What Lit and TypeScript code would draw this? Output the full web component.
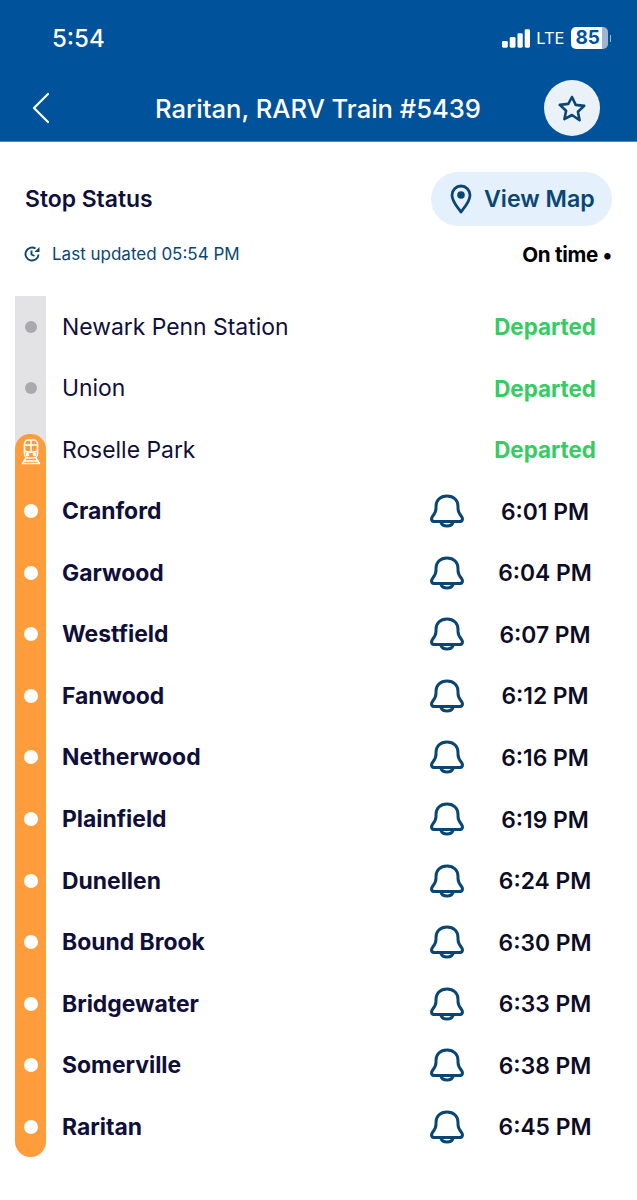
import {LitElement, css, html, svg} from 'lit';
import {customElement} from 'lit/decorators.js';

const passed = ['Newark Penn Station', 'Union', 'Roselle Park'];
const upcoming = [
    ['Cranford', '6:01 PM'],
    ['Garwood', '6:04 PM'],
    ['Westfield', '6:07 PM'],
    ['Fanwood', '6:12 PM'],
    ['Netherwood', '6:16 PM'],
    ['Plainfield', '6:19 PM'],
    ['Dunellen', '6:24 PM'],
    ['Bound Brook', '6:30 PM'],
    ['Bridgewater', '6:33 PM'],
    ['Somerville', '6:38 PM'],
    ['Raritan', '6:45 PM'],
];

const bell = svg`<path d="M17 3c-7 0-11 4.500-11 10.500v2c0 3.500-1.500 5.500-3.500 8-1.800 2.300-1 5 2 5h25c3 0 3.800-2.700 2-5-2-2.500-3.500-4.500-3.500-8v-2C28 7.500 24 3 17 3Z"/><path d="M11 29.500c.8 2.500 3.200 3.500 6 3.500s5.200-1 6-3.500"/>`;

@customElement('app-root')
export class AppRoot extends LitElement {
    static styles = css`
        :host {
            display: block;
            width: 637px;
            height: 1200px;
            background: #fff;
            font-family: Inter, 'Liberation Sans', sans-serif;
            color: #0f0f3a;
            overflow: hidden;
        }

        .header {
            height: 142px;
            box-sizing: border-box;
            background: #00529b;
            border-bottom: 1px solid #5f84a8;
            color: #fff;
            padding: 24px 37px 0 31px;
        }

        .status {
            height: 28px;
            display: flex;
            align-items: center;
            justify-content: space-between;
            padding-left: 21px;
        }

        .clock {
            font-size: 24px;
            font-weight: 500;
        }

        .signal {
            display: flex;
            align-items: center;
            gap: 6px;
            margin-right: -11px;
        }

        .lte {
            font-size: 16.500px;
            font-weight: 400;
        }

        .battery {
            width: 37px;
            height: 22px;
            border-radius: 5px;
            background: linear-gradient(90deg, #fff 85%, #9db6d2 85%);
            color: #00529b;
            font-size: 19px;
            font-weight: 700;
            line-height: 22px;
            padding-left: 5px;
            box-sizing: border-box;
        }

        .nub {
            width: 1.500px;
            height: 7px;
            background: #9db6d2;
            margin-left: -4px;
        }

        .nav {
            height: 56px;
            margin-top: 28px;
            display: flex;
            align-items: center;
        }

        .back {
            width: 20px;
            height: 32px;
        }

        .title {
            flex: 1;
            text-align: center;
            font-size: 25.600px;
            font-weight: 500;
            padding-left: 41px;
            white-space: nowrap;
        }

        .star {
            width: 56px;
            height: 56px;
            border-radius: 50%;
            background: #eaf1f7;
            display: flex;
            align-items: center;
            justify-content: center;
        }

        .top {
            display: flex;
            align-items: center;
            justify-content: space-between;
            padding: 30px 25px 0;
        }

        .heading {
            font-size: 22.900px;
            font-weight: 600;
        }

        .map {
            width: 181px;
            height: 54px;
            box-sizing: border-box;
            border-radius: 27px;
            background: #e4f0fc;
            color: #0b4673;
            display: flex;
            align-items: center;
            gap: 12px;
            padding-left: 19px;
            font-size: 23.200px;
            font-weight: 600;
        }

        .sub {
            display: flex;
            align-items: center;
            justify-content: space-between;
            padding: 14px 25px 0 24px;
            height: 28px;
        }

        .updated {
            display: flex;
            align-items: center;
            gap: 12px;
            color: #0b4673;
            font-size: 17px;
        }

        .ontime {
            color: #000;
            font-size: 20.600px;
            font-weight: 700;
            letter-spacing: -0.3px;
        }

        .stops {
            margin-top: 28px;
            padding-left: 15px;
            width: 581px;
        }

        .stop {
            height: 61.54px;
            display: flex;
            align-items: center;
            font-size: 22.900px;
        }

        .rail {
            width: 31px;
            height: 100%;
            flex: none;
            position: relative;
            display: flex;
            align-items: center;
            justify-content: center;
        }

        .rail.gray {
            background: #e3e3e6;
        }

        .rail.orange {
            background: #ff9c3b;
        }

        .rail.last {
            border-radius: 0 0 16px 16px;
        }

        .dot {
            width: 14px;
            height: 14px;
            border-radius: 50%;
            background: #fff;
        }

        .gray .dot {
            width: 12px;
            height: 12px;
            background: #aaaaae;
        }

        .cap {
            position: absolute;
            inset: 15px 0 0 0;
            background: #ff9c3b;
            border-radius: 15px 15px 0 0;
            display: flex;
            justify-content: center;
            padding-top: 5px;
        }

        .name {
            flex: 1;
            margin-left: 16px;
        }

        .upcoming .name {
            font-weight: 700;
        }

        .done {
            color: #35cc62;
            font-weight: 700;
            font-size: 22.400px;
        }

        .bell {
            width: 34px;
            height: 36px;
            margin-right: 30px;
        }

        .time {
            width: 102px;
            text-align: center;
            font-weight: 600;
            color: #0c0c24;
            font-size: 22.800px;
        }
    `;

    render() {
        return html`
            <div class="header">
                <div class="status">
                    <span class="clock">5:54</span>
                    <div class="signal">
                        <svg width="28" height="19" viewBox="0 0 29 19" fill="#fff">
                            <rect x="0" y="12" width="6" height="7" rx="1.500"/>
                            <rect x="8" y="8" width="6" height="11" rx="1.500"/>
                            <rect x="16" y="4" width="5.500" height="15" rx="1.500"/>
                            <rect x="23.500" y="0" width="5.500" height="19" rx="1.500"/>
                        </svg>
                        <span class="lte">LTE</span>
                        <span class="battery">85</span>
                        <span class="nub"></span>
                    </div>
                </div>
                <div class="nav">
                    <svg class="back" viewBox="0 0 20 32" fill="none" stroke="#fff" stroke-width="2.200" stroke-linecap="round" stroke-linejoin="round">
                        <path d="M17 2 3 16l14 14"/>
                    </svg>
                    <div class="title">Raritan, RARV Train #5439</div>
                    <div class="star">
                        <svg width="28" height="27" viewBox="0 0 28 27" fill="none" stroke="#0b4673" stroke-width="2.600" stroke-linejoin="round">
                            <path d="m14 2 3.700 7.900 8.500 1-6.300 5.800 1.700 8.500L14 20l-7.600 4.200 1.700-8.500-6.300-5.800 8.500-1Z"/>
                        </svg>
                    </div>
                </div>
            </div>
            <div class="top">
                <span class="heading">Stop Status</span>
                <div class="map">
                    <svg width="22" height="30" viewBox="0 0 22 30" fill="none" stroke="#0b4673" stroke-width="2.800">
                        <path d="M11 28c-1-2-9-9.500-9-17a9 9 0 0 1 18 0c0 7.500-8 15-9 17Z" stroke-linejoin="round"/>
                        <circle cx="11" cy="11" r="3.800" fill="#0b4673" stroke="none"/>
                    </svg>
                    View Map
                </div>
            </div>
            <div class="sub">
                <span class="updated">
                    <svg width="16" height="16" viewBox="0 0 16 16" fill="none" stroke="#0b4673" stroke-width="1.900">
                        <path d="M14.500 8.500A6.500 6.500 0 1 1 11.500 2.500"/>
                        <path d="M7.500 4.500V8.500l3 1.500"/>
                        <path d="M15.500 1v5h-5z" fill="#0b4673" stroke="none"/>
                    </svg>
                    Last updated 05:54 PM
                </span>
                <span class="ontime">On time •</span>
            </div>
            <div class="stops">
                ${passed.map((name, i) => html`
                    <div class="stop">
                        <div class="rail gray">
                            ${i === passed.length - 1 ? html`
                                <div class="cap">
                                    <svg width="20" height="26" viewBox="0 0 20 26" fill="none" stroke="#fff" stroke-width="1.500" stroke-linecap="round" stroke-linejoin="round">
                                        <rect x="3.500" y="1" width="13" height="18" rx="4"/>
                                        <path d="M3.500 6h13M3.500 12c3 1.500 10 1.500 13 0M10 1v11"/>
                                        <circle cx="6.500" cy="15.500" r="1.100" fill="#fff"/>
                                        <circle cx="13.500" cy="15.500" r="1.100" fill="#fff"/>
                                        <path d="M5 19l-3.500 5.500h17L15 19M4 22h12"/>
                                    </svg>
                                </div>
                            ` : html`<span class="dot"></span>`}
                        </div>
                        <span class="name">${name}</span>
                        <span class="done">Departed</span>
                    </div>
                `)}
                ${upcoming.map(([name, time], i) => html`
                    <div class="stop upcoming">
                        <div class="rail orange ${i === upcoming.length - 1 ? 'last' : ''}">
                            <span class="dot"></span>
                        </div>
                        <span class="name">${name}</span>
                        <svg class="bell" viewBox="0 0 34 36" fill="none" stroke="#0b4673" stroke-width="3" stroke-linecap="round" stroke-linejoin="round">${bell}</svg>
                        <span class="time">${time}</span>
                    </div>
                `)}
            </div>
        `;
    }
}
